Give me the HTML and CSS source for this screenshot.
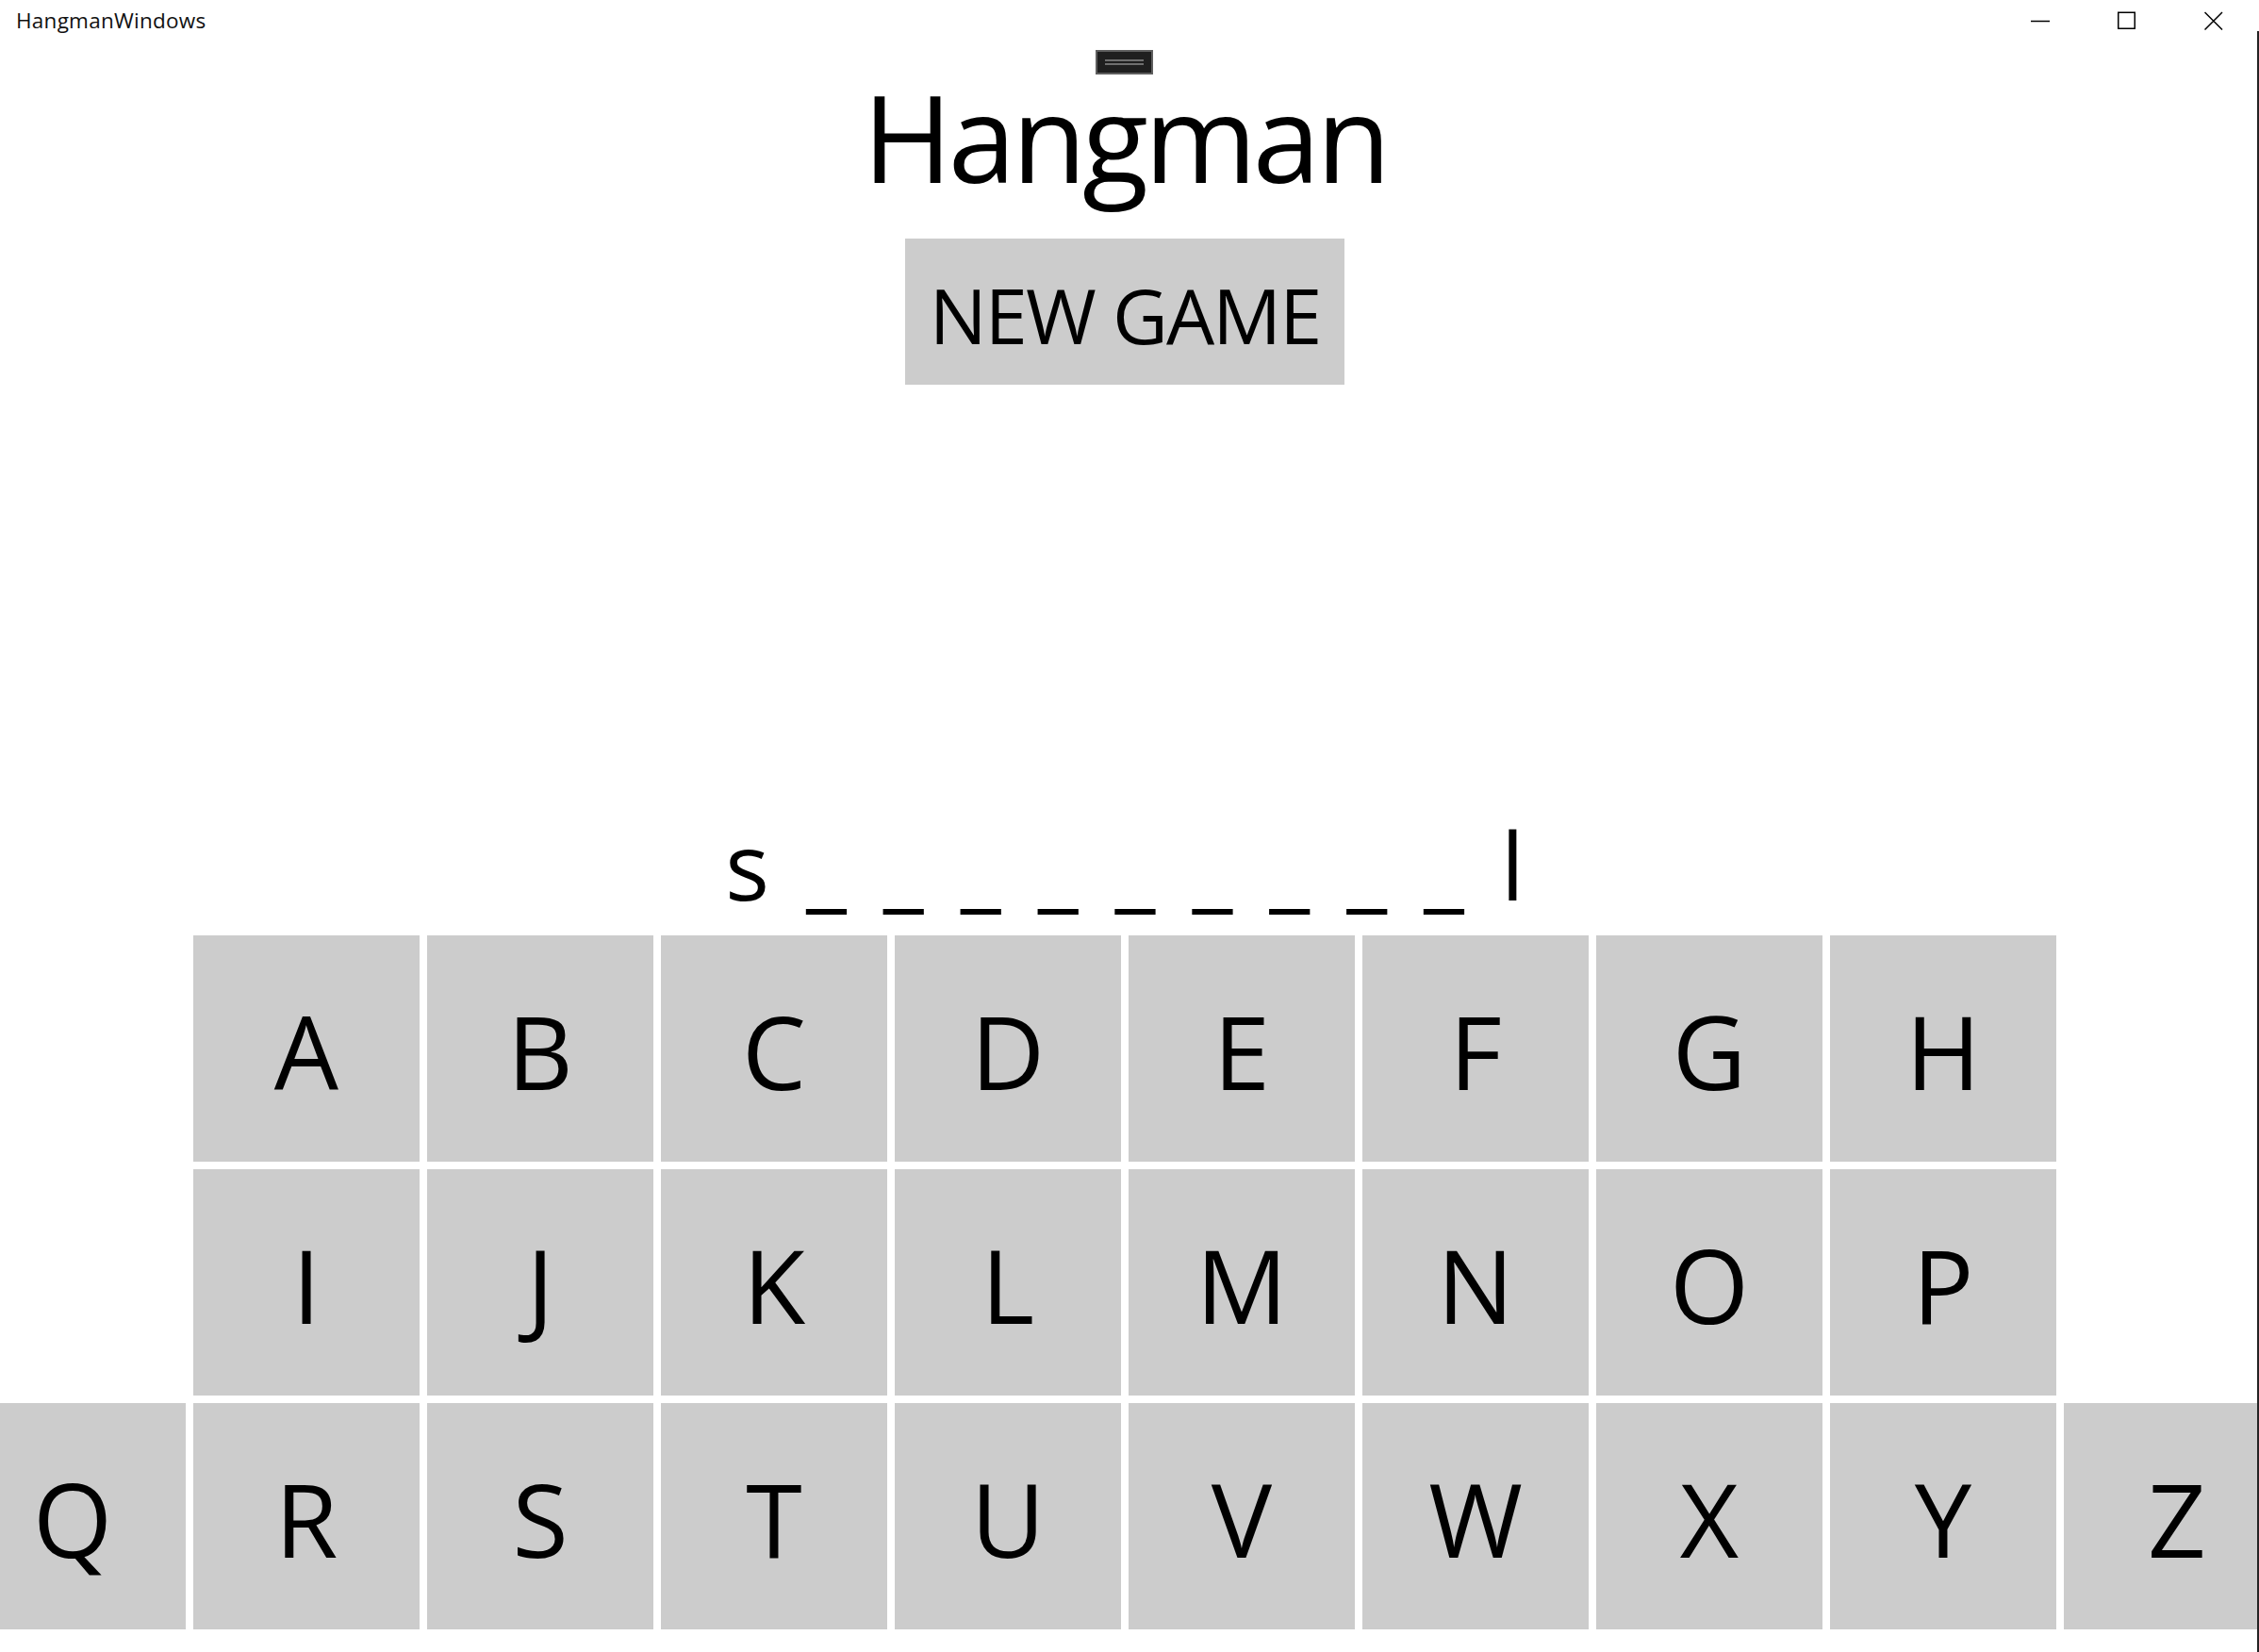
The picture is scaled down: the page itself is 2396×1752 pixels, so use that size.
FILE: index.html
```html
<!DOCTYPE html>
<html lang="en">
<head>
    <meta charset="UTF-8">
    <meta name="viewport" content="width=device-width, initial-scale=1.0">
    <title>HangmanWindows</title>
    <link rel="stylesheet" href="styles.css">
</head>
<body>
    <div class="window">
        <div class="titlebar">
            <span class="app-name">HangmanWindows</span>
            <div class="caption">
                <button class="caption-btn" aria-label="Minimize">
                    <svg width="20" height="20" viewBox="0 0 20 20"><path d="M0 10.5H20" stroke="#000" stroke-width="1.5"/></svg>
                </button>
                <button class="caption-btn" aria-label="Maximize">
                    <svg width="20" height="20" viewBox="0 0 20 20"><rect x="0.75" y="1.25" width="17.5" height="17" fill="none" stroke="#000" stroke-width="1.5"/></svg>
                </button>
                <button class="caption-btn" aria-label="Close">
                    <svg width="20" height="20" viewBox="0 0 20 20"><path d="M0.5 1L19 19.5M19 1L0.5 19.5" stroke="#000" stroke-width="1.5"/></svg>
                </button>
            </div>
        </div>

        <main class="game">
            <div class="debug-bar"><span></span><span></span></div>

            <h1 class="title">Hangman</h1>
            <button class="new-game" id="newGame">NEW GAME</button>

            <div class="gallows" id="gallows"></div>

            <div class="word" id="word">s _ _ _ _ _ _ _ _ _ l</div>

            <div class="keyboard">
                <div class="key-row">
                    <button class="key">A</button>
                    <button class="key">B</button>
                    <button class="key">C</button>
                    <button class="key">D</button>
                    <button class="key">E</button>
                    <button class="key">F</button>
                    <button class="key">G</button>
                    <button class="key">H</button>
                </div>
                <div class="key-row">
                    <button class="key">I</button>
                    <button class="key">J</button>
                    <button class="key">K</button>
                    <button class="key">L</button>
                    <button class="key">M</button>
                    <button class="key">N</button>
                    <button class="key">O</button>
                    <button class="key">P</button>
                </div>
                <div class="key-row">
                    <button class="key">Q</button>
                    <button class="key">R</button>
                    <button class="key">S</button>
                    <button class="key">T</button>
                    <button class="key">U</button>
                    <button class="key">V</button>
                    <button class="key">W</button>
                    <button class="key">X</button>
                    <button class="key">Y</button>
                    <button class="key">Z</button>
                </div>
            </div>
        </main>
    </div>
    <div class="edge"></div>
</body>
</html>
```

FILE: styles.css
```css
html, body {
    margin: 0;
    height: 100%;
}
body {
    font-family: "Open Sans", "Noto Sans", sans-serif;
    background: #ffffff;
    color: #000;
    display: flex;
    overflow: hidden;
}
.window {
    width: 2394px;
    height: 1752px;
    overflow: hidden;
    display: flex;
    flex-direction: column;
}
.edge {
    width: 2px;
    margin-top: 33px;
    background: #232323;
}
.titlebar {
    height: 42px;
    display: flex;
    justify-content: space-between;
    align-items: flex-start;
    flex-shrink: 0;
}
.app-name {
    font-size: 22.5px;
    line-height: 22.5px;
    margin: 11px 0 0 17px;
    letter-spacing: 0.25px;
    color: #111;
}
.caption {
    display: flex;
}
.caption-btn {
    width: 92px;
    height: 42px;
    border: none;
    background: transparent;
    padding: 0;
    display: flex;
    align-items: center;
    justify-content: center;
}
.caption-btn svg {
    display: block;
    margin-top: 1px;
}
.game {
    position: relative;
    width: 2386px;
    flex: 1;
    display: flex;
    flex-direction: column;
    align-items: center;
    padding: 38px 0 24px;
    box-sizing: border-box;
}
.debug-bar {
    position: absolute;
    top: 11px;
    left: 50%;
    margin-left: -31px;
    width: 61px;
    height: 26px;
    box-sizing: border-box;
    background: #1f1f1f;
    border: 2px solid #5e5e5e;
    display: flex;
    flex-direction: column;
    align-items: center;
    padding-top: 8px;
    gap: 2px;
}
.debug-bar span {
    width: 41px;
    height: 2px;
    background: #6f6f6f;
}
.title {
    margin: 0;
    font-weight: 400;
    font-size: 129px;
    line-height: 129px;
    letter-spacing: -4.3px;
}
.new-game {
    margin-top: 44px;
    width: 466px;
    height: 155px;
    flex-shrink: 0;
    border: none;
    background: #cccccc;
    font-family: inherit;
    font-size: 81px;
    line-height: 81px;
    letter-spacing: -1.9px;
    padding: 6px 0 0;
    color: #000;
}
.gallows {
    flex: 1;
    width: 100%;
}
.word {
    font-size: 98px;
    line-height: 98px;
    word-spacing: 13.5px;
    white-space: pre;
    margin-bottom: 26px;
}
.keyboard {
    display: flex;
    flex-direction: column;
    gap: 8px;
    width: 100%;
}
.key-row {
    display: flex;
    justify-content: center;
    gap: 8px;
}
.key {
    flex: 0 0 240px;
    height: 240px;
    border: none;
    background: #cccccc;
    font-family: inherit;
    font-size: 108px;
    line-height: 108px;
    padding: 6px 0 0;
    color: #000;
}
```
